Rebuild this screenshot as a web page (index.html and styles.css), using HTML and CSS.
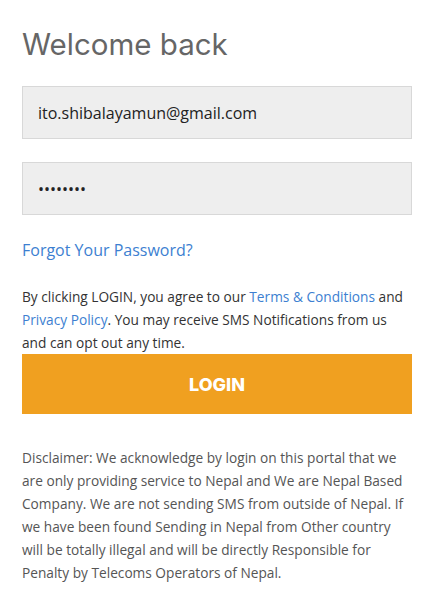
FILE: index.html
```html
<!DOCTYPE html>
<html lang="en">
<head>
  <meta charset="UTF-8" />
  <meta name="viewport" content="width=device-width, initial-scale=1.0"/>
  <title>Login</title>
  <link rel="stylesheet" href="styles.css">
</head>
<body>

  <div class="login">
    <h2>Welcome back</h2>

    <form class="form" onsubmit="return false;">
      <input type="email" class="field" value="ito.shibalayamun@gmail.com" />
      <input type="password" class="field" value="password" />

      <a href="#" class="forgot">Forgot Your Password?</a>

      <p class="terms">
        By clicking LOGIN, you agree to our <a href="#">Terms &amp; Conditions</a> and
        <a href="#">Privacy Policy</a>. You may receive SMS Notifications from us
        and can opt out any time.
      </p>

      <button type="submit" class="button">LOGIN</button>
    </form>

    <!-- Disclaimer -->
    <p class="disclaimer">
      Disclaimer: We acknowledge by login on this portal that we are only providing service to Nepal and We are Nepal Based Company. We are not sending SMS from outside of Nepal. If we have been found Sending in Nepal from Other country will be totally illegal and will be directly Responsible for Penalty by Telecoms Operators of Nepal.
    </p>
  </div>

</body>
</html>
```

FILE: styles.css
```css
* {
  box-sizing: border-box;
}

body {
  margin: 0;
  font-family: "Open Sans", Arial, sans-serif;
  background-color: white;
  color: #333;
}

.login {
  padding: 0 10px 0 22px;
}

h2 {
  font-family: Inter, "Open Sans", sans-serif;
  font-size: 29.5px;
  font-weight: 400;
  color: #666;
  margin: 0;
  padding-top: 26px;
  line-height: 36px;
  height: 86px;
}

.form {
  display: flex;
  flex-direction: column;
}

.field {
  width: 100%;
  height: 53px;
  padding: 0 15px;
  border: 1px solid #d8d8d8;
  border-radius: 0;
  background-color: #eeeeee;
  font-family: "Open Sans", Arial, sans-serif;
  font-size: 16px;
  color: #222;
  margin-bottom: 23px;
  outline: none;
}

.forgot {
  font-size: 16px;
  line-height: 24px;
  color: #3d7fd1;
  text-decoration: none;
  margin-bottom: 23px;
  align-self: flex-start;
}

.terms {
  font-size: 13.7px;
  line-height: 23px;
  margin: 0;
}

.terms a {
  color: #3d7fd1;
  text-decoration: none;
}

.button {
  height: 60px;
  border: none;
  background-color: #f0a020;
  color: white;
  font-family: Inter, "Open Sans", sans-serif;
  font-size: 18px;
  font-weight: 800;
  cursor: pointer;
}

.disclaimer {
  font-size: 13.7px;
  line-height: 23px;
  color: #555;
  margin: 32px 0 0;
}
```
